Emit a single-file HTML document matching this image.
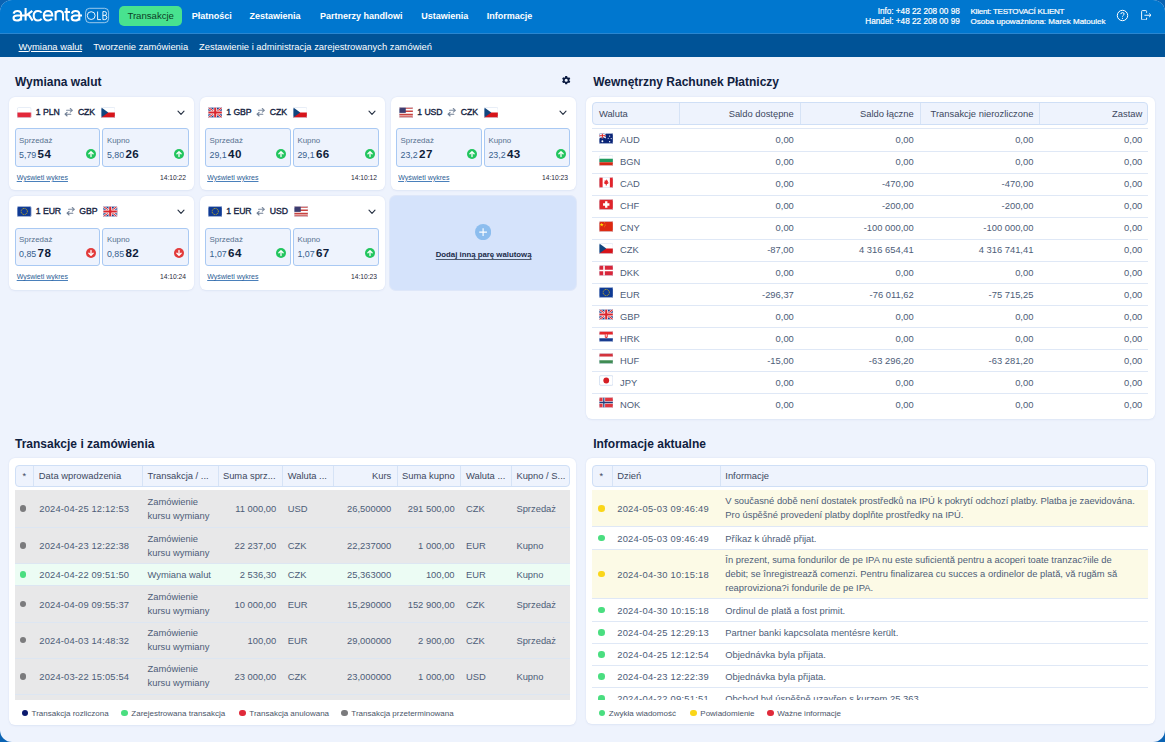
<!DOCTYPE html><html><head><meta charset="utf-8"><style>
*{box-sizing:border-box;margin:0;padding:0}
html,body{width:1165px;height:742px;overflow:hidden;background:#0a63b3;font-family:"Liberation Sans",sans-serif}
.win{position:absolute;left:0;top:0;width:1165px;height:742px;border-radius:12px;overflow:hidden;background:#eef3fd}
.abs{position:absolute}
.t{position:absolute;white-space:nowrap}
.top{position:absolute;left:0;top:0;width:1165px;height:34px;background:#0077cf;border-bottom:1px solid #2a86d0}
.sub{position:absolute;left:0;top:34px;width:1165px;height:23px;background:#005397}
.card{position:absolute;background:#fff;border-radius:6px;box-shadow:0 0 0 0.5px rgba(215,226,244,.3),0 0.5px 2px rgba(60,90,150,.08)}
.ib{position:absolute;background:#eef3fd;border:1px solid #a9c9f3;border-radius:3px}
.thd{position:absolute;background:#eef3fd;border:1px solid #cfdff6;border-radius:4px}
.vsep{position:absolute;top:0;bottom:0;width:1px;background:#d6e3f6}
.hline{position:absolute;height:1px;background:#dfe8f6}
.row{position:absolute;border-bottom:1px solid #dfe8f6}
.dot{position:absolute;border-radius:50%}
</style></head><body>
<svg width="0" height="0" style="position:absolute"><defs><clipPath id="cpl"><rect width="15" height="11" rx="1.6"/></clipPath><symbol id="fpl" viewBox="0 0 15 11"><g clip-path="url(#cpl)"><rect width="15" height="5.5" fill="#fff"/><rect y="5.5" width="15" height="5.5" fill="#e3283a"/></g><rect x=".35" y=".35" width="14.3" height="10.3" rx="1.5" fill="none" stroke="#d3deef" stroke-opacity=".8" stroke-width=".7"/></symbol><clipPath id="ccz"><rect width="15" height="11" rx="1.6"/></clipPath><symbol id="fcz" viewBox="0 0 15 11"><g clip-path="url(#ccz)"><rect width="15" height="5.5" fill="#fff"/><rect y="5.5" width="15" height="5.5" fill="#d7141a"/><path d="M0 0L7.5 5.5L0 11Z" fill="#11457e"/></g><rect x=".35" y=".35" width="14.3" height="10.3" rx="1.5" fill="none" stroke="#d3deef" stroke-opacity=".8" stroke-width=".7"/></symbol><clipPath id="cgb"><rect width="15" height="11" rx="1.6"/></clipPath><symbol id="fgb" viewBox="0 0 15 11"><g clip-path="url(#cgb)"><rect width="15" height="11" fill="#1f3f8a"/><path d="M0 0L15 11M15 0L0 11" stroke="#fff" stroke-width="2.2"/><path d="M0 0L15 11M15 0L0 11" stroke="#d9262e" stroke-width="1.1"/><path d="M7.5 0V11M0 5.5H15" stroke="#fff" stroke-width="3.6"/><path d="M7.5 0V11M0 5.5H15" stroke="#d9262e" stroke-width="2.2"/></g><rect x=".35" y=".35" width="14.3" height="10.3" rx="1.5" fill="none" stroke="#d3deef" stroke-opacity=".8" stroke-width=".7"/></symbol><clipPath id="cus"><rect width="15" height="11" rx="1.6"/></clipPath><symbol id="fus" viewBox="0 0 15 11"><g clip-path="url(#cus)"><rect width="15" height="11" fill="#fff"/><path d="M0 0.85H15M0 4.25H15M0 7.65H15M0 10.2H15" stroke="#c8423f" stroke-width="1.7"/><path d="M0 2.55H15M0 5.95H15" stroke="#fff" stroke-width="0"/><rect width="7" height="5.9" fill="#3c3b6e"/></g><rect x=".35" y=".35" width="14.3" height="10.3" rx="1.5" fill="none" stroke="#d3deef" stroke-opacity=".8" stroke-width=".7"/></symbol><clipPath id="ceu"><rect width="15" height="11" rx="1.6"/></clipPath><symbol id="feu" viewBox="0 0 15 11"><g clip-path="url(#ceu)"><rect width="15" height="11" fill="#0f3a94"/><circle cx="7.5" cy="5.5" r="3.2" fill="none" stroke="#f5cc00" stroke-width="0.9" stroke-dasharray="0.9 0.78"/></g><rect x=".35" y=".35" width="14.3" height="10.3" rx="1.5" fill="none" stroke="#d3deef" stroke-opacity=".8" stroke-width=".7"/></symbol><clipPath id="cau"><rect width="15" height="11" rx="1.6"/></clipPath><symbol id="fau" viewBox="0 0 15 11"><g clip-path="url(#cau)"><rect width="15" height="11" fill="#0b2577"/><path d="M0 0L7 5M7 0L0 5" stroke="#fff" stroke-width="1.2"/><path d="M3.5 0V5.2M0 2.6H7" stroke="#fff" stroke-width="1.8"/><path d="M3.5 0V5.2M0 2.6H7" stroke="#d22" stroke-width="1"/><circle cx="3.5" cy="8.3" r="1" fill="#fff"/><circle cx="11" cy="3" r=".7" fill="#fff"/><circle cx="12.6" cy="5.6" r=".6" fill="#fff"/><circle cx="11" cy="8.8" r=".7" fill="#fff"/><circle cx="9.5" cy="5.2" r=".6" fill="#fff"/></g><rect x=".35" y=".35" width="14.3" height="10.3" rx="1.5" fill="none" stroke="#d3deef" stroke-opacity=".8" stroke-width=".7"/></symbol><clipPath id="cbg"><rect width="15" height="11" rx="1.6"/></clipPath><symbol id="fbg" viewBox="0 0 15 11"><g clip-path="url(#cbg)"><rect width="15" height="3.67" fill="#fff"/><rect y="3.67" width="15" height="3.67" fill="#1f9a5e"/><rect y="7.33" width="15" height="3.67" fill="#d62612"/></g><rect x=".35" y=".35" width="14.3" height="10.3" rx="1.5" fill="none" stroke="#d3deef" stroke-opacity=".8" stroke-width=".7"/></symbol><clipPath id="cca"><rect width="15" height="11" rx="1.6"/></clipPath><symbol id="fca" viewBox="0 0 15 11"><g clip-path="url(#cca)"><rect width="15" height="11" fill="#fff"/><rect width="3.75" height="11" fill="#e3242b"/><rect x="11.25" width="3.75" height="11" fill="#e3242b"/><path d="M7.5 2.2L8.3 3.8L9.4 3.4L9 5.6L10 5.2L9.6 6.6L8 7.4V8.6H7V7.4L5.4 6.6L5 5.2L6 5.6L5.6 3.4L6.7 3.8Z" fill="#e3242b"/></g><rect x=".35" y=".35" width="14.3" height="10.3" rx="1.5" fill="none" stroke="#d3deef" stroke-opacity=".8" stroke-width=".7"/></symbol><clipPath id="cch"><rect width="15" height="11" rx="1.6"/></clipPath><symbol id="fch" viewBox="0 0 15 11"><g clip-path="url(#cch)"><rect width="15" height="11" fill="#e0242b"/><path d="M6.3 2.2H8.7V4.3H10.8V6.7H8.7V8.8H6.3V6.7H4.2V4.3H6.3Z" fill="#fff"/></g><rect x=".35" y=".35" width="14.3" height="10.3" rx="1.5" fill="none" stroke="#d3deef" stroke-opacity=".8" stroke-width=".7"/></symbol><clipPath id="ccn"><rect width="15" height="11" rx="1.6"/></clipPath><symbol id="fcn" viewBox="0 0 15 11"><g clip-path="url(#ccn)"><rect width="15" height="11" fill="#de2910"/><path d="M2.8 1.5L3.3 3L4.9 3L3.6 3.9L4.1 5.4L2.8 4.5L1.5 5.4L2 3.9L0.7 3L2.3 3Z" fill="#ffde00"/><circle cx="5.5" cy="1.6" r=".4" fill="#ffde00"/><circle cx="6.3" cy="3" r=".4" fill="#ffde00"/><circle cx="6.3" cy="4.6" r=".4" fill="#ffde00"/><circle cx="5.5" cy="5.8" r=".4" fill="#ffde00"/></g><rect x=".35" y=".35" width="14.3" height="10.3" rx="1.5" fill="none" stroke="#d3deef" stroke-opacity=".8" stroke-width=".7"/></symbol><clipPath id="cdk"><rect width="15" height="11" rx="1.6"/></clipPath><symbol id="fdk" viewBox="0 0 15 11"><g clip-path="url(#cdk)"><rect width="15" height="11" fill="#d8263a"/><path d="M5.2 0V11M0 5.5H15" stroke="#fff" stroke-width="1.6"/></g><rect x=".35" y=".35" width="14.3" height="10.3" rx="1.5" fill="none" stroke="#d3deef" stroke-opacity=".8" stroke-width=".7"/></symbol><clipPath id="chr"><rect width="15" height="11" rx="1.6"/></clipPath><symbol id="fhr" viewBox="0 0 15 11"><g clip-path="url(#chr)"><rect width="15" height="3.67" fill="#e5262b"/><rect y="3.67" width="15" height="3.67" fill="#fff"/><rect y="7.33" width="15" height="3.67" fill="#173a8f"/><path d="M6 2.6H9V6.4Q7.5 8 6 6.4Z" fill="#e5262b"/><path d="M6.7 3.2H8.3V5.8H6.7Z" fill="#fff" opacity=".7"/></g><rect x=".35" y=".35" width="14.3" height="10.3" rx="1.5" fill="none" stroke="#d3deef" stroke-opacity=".8" stroke-width=".7"/></symbol><clipPath id="chu"><rect width="15" height="11" rx="1.6"/></clipPath><symbol id="fhu" viewBox="0 0 15 11"><g clip-path="url(#chu)"><rect width="15" height="3.67" fill="#d3333d"/><rect y="3.67" width="15" height="3.67" fill="#fff"/><rect y="7.33" width="15" height="3.67" fill="#3f8c52"/></g><rect x=".35" y=".35" width="14.3" height="10.3" rx="1.5" fill="none" stroke="#d3deef" stroke-opacity=".8" stroke-width=".7"/></symbol><clipPath id="cjp"><rect width="15" height="11" rx="1.6"/></clipPath><symbol id="fjp" viewBox="0 0 15 11"><g clip-path="url(#cjp)"><rect x=".5" y=".5" width="14" height="10" rx="1.5" fill="#fff" stroke="#dbe6f6"/><circle cx="7.5" cy="5.5" r="3" fill="#d51d24"/></g><rect x=".35" y=".35" width="14.3" height="10.3" rx="1.5" fill="none" stroke="#d3deef" stroke-opacity=".8" stroke-width=".7"/></symbol><clipPath id="cno"><rect width="15" height="11" rx="1.6"/></clipPath><symbol id="fno" viewBox="0 0 15 11"><g clip-path="url(#cno)"><rect width="15" height="11" fill="#e0373f"/><path d="M5 0V11M0 5.5H15" stroke="#fff" stroke-width="2.6"/><path d="M5 0V11M0 5.5H15" stroke="#203d7a" stroke-width="1.3"/></g><rect x=".35" y=".35" width="14.3" height="10.3" rx="1.5" fill="none" stroke="#d3deef" stroke-opacity=".8" stroke-width=".7"/></symbol></defs></svg>
<div class="win">
<div class="top"></div><div class="sub"></div>
<svg class="abs" style="left:0;top:0" width="90" height="26" viewBox="0 0 90 26"><g fill="none" stroke="#fff" stroke-width="2.05"><path d="M13.5 13.6Q14.3 10.9 17.3 10.9Q21.1 10.9 21.1 14.3V20.6"/><path d="M25.6 15.4H17.1Q13.5 15.4 13.5 18Q13.5 20.5 16.9 20.5Q20 20.5 21.1 18.2"/><path d="M25.6 8.1V20.6M32.3 10.9L25.8 15.9M28.3 14.1L32.6 20.6"/><path d="M41.6 12.7Q40.4 10.9 38 10.9Q33.7 10.9 33.7 15.7Q33.7 20.5 38 20.5Q40.4 20.5 41.6 18.7"/><path d="M43.8 15.5H52.3Q52.3 10.9 48.1 10.9Q43.8 10.9 43.8 15.7Q43.8 20.5 48.2 20.5Q50.8 20.5 51.9 18.6"/><path d="M55.6 10.9V20.6M55.6 14.6Q55.6 10.9 59.3 10.9Q63 10.9 63 14.6V20.6"/><path d="M66.6 8V18.3Q66.6 20.5 69.2 20.5M64.5 11.9H70"/><path d="M71.7 13.6Q72.5 10.9 75.5 10.9Q79.3 10.9 79.3 14.3V20.6"/><path d="M82 15.4H75.3Q71.7 15.4 71.7 18Q71.7 20.5 75.1 20.5Q78.2 20.5 79.3 18.2"/></g></svg>
<svg class="abs" style="left:80px;top:4px" width="32" height="22" viewBox="80 4 32 22"><rect x="85.6" y="8.3" width="23" height="14.4" rx="4" fill="none" stroke="#fff" stroke-opacity=".6" stroke-width="1"/><g fill="none" stroke="#fff" stroke-opacity=".92" stroke-width="1"><circle cx="91.2" cy="15.6" r="3.9"/><path d="M97.6 11.5V19.6H100.9"/><path d="M102.9 19.6V11.6H104.7Q106.5 11.6 106.5 13.5Q106.5 15.4 104.7 15.4H102.9M104.7 15.4Q106.9 15.4 106.9 17.5Q106.9 19.6 104.7 19.6H102.9"/></g></svg>
<div class="abs" style="left:119px;top:6px;width:63px;height:20px;border-radius:5px;background:#48e28f"></div>
<div class="t " style="top:11.17px;font-size:9.6px;line-height:9.6px;left:127.4px;color:#0d3f25;">Transakcje</div>
<div class="t " style="top:12.38px;font-size:9px;line-height:9px;left:191.7px;font-weight:bold;color:#fff;">Płatności</div>
<div class="t " style="top:12.38px;font-size:9px;line-height:9px;left:249.5px;font-weight:bold;color:#fff;">Zestawienia</div>
<div class="t " style="top:12.38px;font-size:9px;line-height:9px;left:320px;font-weight:bold;color:#fff;">Partnerzy handlowi</div>
<div class="t " style="top:12.38px;font-size:9px;line-height:9px;left:421.2px;font-weight:bold;color:#fff;">Ustawienia</div>
<div class="t " style="top:12.38px;font-size:9px;line-height:9px;left:486.8px;font-weight:bold;color:#fff;">Informacje</div>
<div class="t " style="top:41.64px;font-size:9.4px;line-height:9.4px;left:18.6px;color:#fff;text-decoration:underline">Wymiana walut</div>
<div class="t " style="top:41.64px;font-size:9.4px;line-height:9.4px;left:93.3px;color:#fff;">Tworzenie zamówienia</div>
<div class="t " style="top:41.64px;font-size:9.4px;line-height:9.4px;left:199px;color:#fff;">Zestawienie i administracja zarejestrowanych zamówień</div>
<div class="t " style="top:7.96px;font-size:8.2px;line-height:8.2px;right:205.20px;text-align:right;color:#fff;-webkit-text-stroke:0.2px #fff">Info: +48 22 208 00 98</div>
<div class="t " style="top:17.56px;font-size:8.2px;line-height:8.2px;right:205.20px;text-align:right;color:#fff;-webkit-text-stroke:0.2px #fff">Handel: +48 22 208 00 99</div>
<div class="t " style="top:8.09px;font-size:8.05px;line-height:8.05px;left:970.5px;color:#fff;-webkit-text-stroke:0.2px #fff;letter-spacing:-0.25px">Klient: TESTOVACÍ KLIENT</div>
<div class="t " style="top:17.69px;font-size:8.05px;line-height:8.05px;left:970.5px;color:#fff;-webkit-text-stroke:0.2px #fff">Osoba upoważniona: Marek Matoulek</div>
<svg class="abs" style="left:1116px;top:8.5px" width="13" height="13" viewBox="0 0 13 13"><circle cx="6.5" cy="6.5" r="5.2" fill="none" stroke="#fff" stroke-width="1"/><path d="M4.9 5.1Q4.9 3.6 6.5 3.6Q8.1 3.6 8.1 5Q8.1 5.9 7.2 6.4Q6.5 6.8 6.5 7.6" fill="none" stroke="#fff" stroke-width="1"/><circle cx="6.5" cy="9.3" r=".6" fill="#fff"/></svg>
<svg class="abs" style="left:1140.5px;top:9.5px" width="11" height="10.5" viewBox="0 0 11 10.5"><path d="M5.6 2.8V1.5Q5.6 0.6 4.8 0.6H1.4Q0.6 0.6 0.6 1.5V9Q0.6 9.9 1.4 9.9H4.8Q5.6 9.9 5.6 9V7.7" fill="none" stroke="#fff" stroke-width="0.95"/><path d="M3.4 5.25H10M8.1 3.4L10 5.25L8.1 7.1" fill="none" stroke="#fff" stroke-width="0.95" stroke-linejoin="round"/></svg>
<div class="t " style="top:76.04px;font-size:12px;line-height:12px;left:15px;font-weight:bold;color:#10213f;">Wymiana walut</div>
<div class="t " style="top:75.64px;font-size:12px;line-height:12px;left:593.2px;font-weight:bold;color:#10213f;">Wewnętrzny Rachunek Płatniczy</div>
<div class="t " style="top:438.04px;font-size:12px;line-height:12px;left:15px;font-weight:bold;color:#10213f;">Transakcje i zamówienia</div>
<div class="t " style="top:438.04px;font-size:12px;line-height:12px;left:593.2px;font-weight:bold;color:#10213f;">Informacje aktualne</div>
<svg class="abs" style="left:561px;top:75px" width="10.4" height="10.4" viewBox="0 0 24 24"><path fill="#0a1a40" d="M19.14 12.94c.04-.3.06-.61.06-.94 0-.32-.02-.64-.07-.94l2.03-1.58a.49.49 0 0 0 .12-.61l-1.92-3.32a.49.49 0 0 0-.59-.22l-2.39.96c-.5-.38-1.03-.7-1.62-.94l-.36-2.54a.48.48 0 0 0-.48-.41h-3.84c-.24 0-.43.17-.47.41l-.36 2.54c-.59.24-1.13.57-1.62.94l-2.39-.96a.48.48 0 0 0-.59.22L2.74 8.87c-.12.21-.08.47.12.61l2.03 1.58c-.05.3-.09.63-.09.94s.02.64.07.94l-2.03 1.58a.49.49 0 0 0-.12.61l1.92 3.32c.12.22.37.29.59.22l2.39-.96c.5.38 1.03.7 1.62.94l.36 2.54c.05.24.24.41.48.41h3.84c.24 0 .44-.17.47-.41l.36-2.54c.59-.24 1.13-.56 1.62-.94l2.39.96c.22.08.47 0 .59-.22l1.92-3.32c.12-.22.07-.47-.12-.61l-2.01-1.58zM12 15.6A3.6 3.6 0 1 1 12 8.4a3.6 3.6 0 0 1 0 7.2z"/></svg>
<div class="card" style="left:9px;top:97px;width:185px;height:93px"></div>
<div class="t" style="left:17px;top:106.7px;height:11px;display:flex;align-items:center;font-size:8.7px;line-height:8.7px;letter-spacing:-0.08px;color:#15233f;-webkit-text-stroke:0.35px #15233f"><svg width="14.5" height="11" style="margin-right:4.35px;flex:none"><use href="#fpl"/></svg><span>1 PLN</span><svg style="margin:0 4.3px 0 4.6px;flex:none;position:relative;top:0.3px" width="9.4" height="9" viewBox="0 0 9.4 9"><path d="M2.6 2.3H8.2M6.3 0.5L8.4 2.3L6.3 4.1" fill="none" stroke="#7e8ca0" stroke-width="1.1" stroke-linecap="round" stroke-linejoin="round"/><path d="M6.8 6.2H1.2M3.1 4.4L1 6.2L3.1 8" fill="none" stroke="#6f7e94" stroke-width="1.1" stroke-linecap="round" stroke-linejoin="round"/></svg><span>CZK</span><svg width="14.5" height="11" style="margin-left:5.6px;flex:none"><use href="#fcz"/></svg></div>
<svg class="abs" style="left:176.5px;top:110px" width="8" height="6" viewBox="0 0 8 6"><path d="M1 1.2L4 4.3L7 1.2" fill="none" stroke="#273244" stroke-width="1.15" stroke-linecap="round" stroke-linejoin="round"/></svg>
<div class="ib" style="left:14.50px;top:128.3px;width:85.60px;height:38.5px"></div>
<div class="t " style="top:136.71px;font-size:7.9px;line-height:7.9px;left:19.0px;color:#56718f;">Sprzedaż</div>
<div class="t" style="left:19.00px;top:147.54px;font-size:12px;line-height:12px;color:#0f1d3a"><span style="font-size:8.9px;color:#385f8e">5,79</span><b style="font-size:11.6px;margin-left:1.3px;letter-spacing:0.4px">54</b></div>
<svg class="abs" style="left:85.8px;top:148.5px" width="10" height="10" viewBox="0 0 10 10"><circle cx="5" cy="5" r="5" fill="#22c55e"/><path d="M5 7.6V2.6M2.9 4.7L5 2.6L7.1 4.7" fill="none" stroke="#fff" stroke-width="1.3" stroke-linecap="round" stroke-linejoin="round"/></svg>
<div class="ib" style="left:102.40px;top:128.3px;width:86.20px;height:38.5px"></div>
<div class="t " style="top:136.71px;font-size:7.9px;line-height:7.9px;left:106.9px;color:#56718f;">Kupno</div>
<div class="t" style="left:106.90px;top:147.54px;font-size:12px;line-height:12px;color:#0f1d3a"><span style="font-size:8.9px;color:#385f8e">5,80</span><b style="font-size:11.6px;margin-left:1.3px;letter-spacing:0.4px">26</b></div>
<svg class="abs" style="left:174.3px;top:148.5px" width="10" height="10" viewBox="0 0 10 10"><circle cx="5" cy="5" r="5" fill="#22c55e"/><path d="M5 7.6V2.6M2.9 4.7L5 2.6L7.1 4.7" fill="none" stroke="#fff" stroke-width="1.3" stroke-linecap="round" stroke-linejoin="round"/></svg>
<div class="t " style="top:173.87px;font-size:7px;line-height:7px;left:16.7px;color:#2c5e96;text-decoration:underline;text-decoration-color:#4a80bb">Wyświetl wykres</div>
<div class="t " style="top:174.73px;font-size:6.7px;line-height:6.7px;right:979.00px;text-align:right;color:#1f2838;">14:10:22</div>
<div class="card" style="left:199.5px;top:97px;width:185.5px;height:93px"></div>
<div class="t" style="left:207.5px;top:106.7px;height:11px;display:flex;align-items:center;font-size:8.7px;line-height:8.7px;letter-spacing:-0.08px;color:#15233f;-webkit-text-stroke:0.35px #15233f"><svg width="14.5" height="11" style="margin-right:4.35px;flex:none"><use href="#fgb"/></svg><span>1 GBP</span><svg style="margin:0 4.3px 0 4.6px;flex:none;position:relative;top:0.3px" width="9.4" height="9" viewBox="0 0 9.4 9"><path d="M2.6 2.3H8.2M6.3 0.5L8.4 2.3L6.3 4.1" fill="none" stroke="#7e8ca0" stroke-width="1.1" stroke-linecap="round" stroke-linejoin="round"/><path d="M6.8 6.2H1.2M3.1 4.4L1 6.2L3.1 8" fill="none" stroke="#6f7e94" stroke-width="1.1" stroke-linecap="round" stroke-linejoin="round"/></svg><span>CZK</span><svg width="14.5" height="11" style="margin-left:5.6px;flex:none"><use href="#fcz"/></svg></div>
<svg class="abs" style="left:367.5px;top:110px" width="8" height="6" viewBox="0 0 8 6"><path d="M1 1.2L4 4.3L7 1.2" fill="none" stroke="#273244" stroke-width="1.15" stroke-linecap="round" stroke-linejoin="round"/></svg>
<div class="ib" style="left:205.00px;top:128.3px;width:85.60px;height:38.5px"></div>
<div class="t " style="top:136.71px;font-size:7.9px;line-height:7.9px;left:209.5px;color:#56718f;">Sprzedaż</div>
<div class="t" style="left:209.50px;top:147.54px;font-size:12px;line-height:12px;color:#0f1d3a"><span style="font-size:8.9px;color:#385f8e">29,1</span><b style="font-size:11.6px;margin-left:1.3px;letter-spacing:0.4px">40</b></div>
<svg class="abs" style="left:276.3px;top:148.5px" width="10" height="10" viewBox="0 0 10 10"><circle cx="5" cy="5" r="5" fill="#22c55e"/><path d="M5 7.6V2.6M2.9 4.7L5 2.6L7.1 4.7" fill="none" stroke="#fff" stroke-width="1.3" stroke-linecap="round" stroke-linejoin="round"/></svg>
<div class="ib" style="left:292.90px;top:128.3px;width:86.20px;height:38.5px"></div>
<div class="t " style="top:136.71px;font-size:7.9px;line-height:7.9px;left:297.4px;color:#56718f;">Kupno</div>
<div class="t" style="left:297.40px;top:147.54px;font-size:12px;line-height:12px;color:#0f1d3a"><span style="font-size:8.9px;color:#385f8e">29,1</span><b style="font-size:11.6px;margin-left:1.3px;letter-spacing:0.4px">66</b></div>
<svg class="abs" style="left:364.8px;top:148.5px" width="10" height="10" viewBox="0 0 10 10"><circle cx="5" cy="5" r="5" fill="#22c55e"/><path d="M5 7.6V2.6M2.9 4.7L5 2.6L7.1 4.7" fill="none" stroke="#fff" stroke-width="1.3" stroke-linecap="round" stroke-linejoin="round"/></svg>
<div class="t " style="top:173.87px;font-size:7px;line-height:7px;left:207.2px;color:#2c5e96;text-decoration:underline;text-decoration-color:#4a80bb">Wyświetl wykres</div>
<div class="t " style="top:174.73px;font-size:6.7px;line-height:6.7px;right:788.00px;text-align:right;color:#1f2838;">14:10:12</div>
<div class="card" style="left:390.5px;top:97px;width:185.5px;height:93px"></div>
<div class="t" style="left:398.5px;top:106.7px;height:11px;display:flex;align-items:center;font-size:8.7px;line-height:8.7px;letter-spacing:-0.08px;color:#15233f;-webkit-text-stroke:0.35px #15233f"><svg width="14.5" height="11" style="margin-right:4.35px;flex:none"><use href="#fus"/></svg><span>1 USD</span><svg style="margin:0 4.3px 0 4.6px;flex:none;position:relative;top:0.3px" width="9.4" height="9" viewBox="0 0 9.4 9"><path d="M2.6 2.3H8.2M6.3 0.5L8.4 2.3L6.3 4.1" fill="none" stroke="#7e8ca0" stroke-width="1.1" stroke-linecap="round" stroke-linejoin="round"/><path d="M6.8 6.2H1.2M3.1 4.4L1 6.2L3.1 8" fill="none" stroke="#6f7e94" stroke-width="1.1" stroke-linecap="round" stroke-linejoin="round"/></svg><span>CZK</span><svg width="14.5" height="11" style="margin-left:5.6px;flex:none"><use href="#fcz"/></svg></div>
<svg class="abs" style="left:558.5px;top:110px" width="8" height="6" viewBox="0 0 8 6"><path d="M1 1.2L4 4.3L7 1.2" fill="none" stroke="#273244" stroke-width="1.15" stroke-linecap="round" stroke-linejoin="round"/></svg>
<div class="ib" style="left:396.00px;top:128.3px;width:85.60px;height:38.5px"></div>
<div class="t " style="top:136.71px;font-size:7.9px;line-height:7.9px;left:400.5px;color:#56718f;">Sprzedaż</div>
<div class="t" style="left:400.50px;top:147.54px;font-size:12px;line-height:12px;color:#0f1d3a"><span style="font-size:8.9px;color:#385f8e">23,2</span><b style="font-size:11.6px;margin-left:1.3px;letter-spacing:0.4px">27</b></div>
<svg class="abs" style="left:467.3px;top:148.5px" width="10" height="10" viewBox="0 0 10 10"><circle cx="5" cy="5" r="5" fill="#22c55e"/><path d="M5 7.6V2.6M2.9 4.7L5 2.6L7.1 4.7" fill="none" stroke="#fff" stroke-width="1.3" stroke-linecap="round" stroke-linejoin="round"/></svg>
<div class="ib" style="left:483.90px;top:128.3px;width:86.20px;height:38.5px"></div>
<div class="t " style="top:136.71px;font-size:7.9px;line-height:7.9px;left:488.4px;color:#56718f;">Kupno</div>
<div class="t" style="left:488.40px;top:147.54px;font-size:12px;line-height:12px;color:#0f1d3a"><span style="font-size:8.9px;color:#385f8e">23,2</span><b style="font-size:11.6px;margin-left:1.3px;letter-spacing:0.4px">43</b></div>
<svg class="abs" style="left:555.8px;top:148.5px" width="10" height="10" viewBox="0 0 10 10"><circle cx="5" cy="5" r="5" fill="#22c55e"/><path d="M5 7.6V2.6M2.9 4.7L5 2.6L7.1 4.7" fill="none" stroke="#fff" stroke-width="1.3" stroke-linecap="round" stroke-linejoin="round"/></svg>
<div class="t " style="top:173.87px;font-size:7px;line-height:7px;left:398.2px;color:#2c5e96;text-decoration:underline;text-decoration-color:#4a80bb">Wyświetl wykres</div>
<div class="t " style="top:174.73px;font-size:6.7px;line-height:6.7px;right:597.00px;text-align:right;color:#1f2838;">14:10:23</div>
<div class="card" style="left:9px;top:196.3px;width:185px;height:93.5px"></div>
<div class="t" style="left:17px;top:206.0px;height:11px;display:flex;align-items:center;font-size:8.7px;line-height:8.7px;letter-spacing:-0.08px;color:#15233f;-webkit-text-stroke:0.35px #15233f"><svg width="14.5" height="11" style="margin-right:4.35px;flex:none"><use href="#feu"/></svg><span>1 EUR</span><svg style="margin:0 4.3px 0 4.6px;flex:none;position:relative;top:0.3px" width="9.4" height="9" viewBox="0 0 9.4 9"><path d="M2.6 2.3H8.2M6.3 0.5L8.4 2.3L6.3 4.1" fill="none" stroke="#7e8ca0" stroke-width="1.1" stroke-linecap="round" stroke-linejoin="round"/><path d="M6.8 6.2H1.2M3.1 4.4L1 6.2L3.1 8" fill="none" stroke="#6f7e94" stroke-width="1.1" stroke-linecap="round" stroke-linejoin="round"/></svg><span>GBP</span><svg width="14.5" height="11" style="margin-left:5.6px;flex:none"><use href="#fgb"/></svg></div>
<svg class="abs" style="left:176.5px;top:209.3px" width="8" height="6" viewBox="0 0 8 6"><path d="M1 1.2L4 4.3L7 1.2" fill="none" stroke="#273244" stroke-width="1.15" stroke-linecap="round" stroke-linejoin="round"/></svg>
<div class="ib" style="left:14.50px;top:227.60000000000002px;width:85.60px;height:38.5px"></div>
<div class="t " style="top:236.01px;font-size:7.9px;line-height:7.9px;left:19.0px;color:#56718f;">Sprzedaż</div>
<div class="t" style="left:19.00px;top:246.84px;font-size:12px;line-height:12px;color:#0f1d3a"><span style="font-size:8.9px;color:#385f8e">0,85</span><b style="font-size:11.6px;margin-left:1.3px;letter-spacing:0.4px">78</b></div>
<svg class="abs" style="left:85.8px;top:247.8px" width="10" height="10" viewBox="0 0 10 10"><circle cx="5" cy="5" r="5" fill="#e23b3b"/><path d="M5 2.4V7.4M2.9 5.3L5 7.4L7.1 5.3" fill="none" stroke="#fff" stroke-width="1.3" stroke-linecap="round" stroke-linejoin="round"/></svg>
<div class="ib" style="left:102.40px;top:227.60000000000002px;width:86.20px;height:38.5px"></div>
<div class="t " style="top:236.01px;font-size:7.9px;line-height:7.9px;left:106.9px;color:#56718f;">Kupno</div>
<div class="t" style="left:106.90px;top:246.84px;font-size:12px;line-height:12px;color:#0f1d3a"><span style="font-size:8.9px;color:#385f8e">0,85</span><b style="font-size:11.6px;margin-left:1.3px;letter-spacing:0.4px">82</b></div>
<svg class="abs" style="left:174.3px;top:247.8px" width="10" height="10" viewBox="0 0 10 10"><circle cx="5" cy="5" r="5" fill="#e23b3b"/><path d="M5 2.4V7.4M2.9 5.3L5 7.4L7.1 5.3" fill="none" stroke="#fff" stroke-width="1.3" stroke-linecap="round" stroke-linejoin="round"/></svg>
<div class="t " style="top:273.17px;font-size:7px;line-height:7px;left:16.7px;color:#2c5e96;text-decoration:underline;text-decoration-color:#4a80bb">Wyświetl wykres</div>
<div class="t " style="top:274.03px;font-size:6.7px;line-height:6.7px;right:979.00px;text-align:right;color:#1f2838;">14:10:24</div>
<div class="card" style="left:199.5px;top:196.3px;width:185.5px;height:93.5px"></div>
<div class="t" style="left:207.5px;top:206.0px;height:11px;display:flex;align-items:center;font-size:8.7px;line-height:8.7px;letter-spacing:-0.08px;color:#15233f;-webkit-text-stroke:0.35px #15233f"><svg width="14.5" height="11" style="margin-right:4.35px;flex:none"><use href="#feu"/></svg><span>1 EUR</span><svg style="margin:0 4.3px 0 4.6px;flex:none;position:relative;top:0.3px" width="9.4" height="9" viewBox="0 0 9.4 9"><path d="M2.6 2.3H8.2M6.3 0.5L8.4 2.3L6.3 4.1" fill="none" stroke="#7e8ca0" stroke-width="1.1" stroke-linecap="round" stroke-linejoin="round"/><path d="M6.8 6.2H1.2M3.1 4.4L1 6.2L3.1 8" fill="none" stroke="#6f7e94" stroke-width="1.1" stroke-linecap="round" stroke-linejoin="round"/></svg><span>USD</span><svg width="14.5" height="11" style="margin-left:5.6px;flex:none"><use href="#fus"/></svg></div>
<svg class="abs" style="left:367.5px;top:209.3px" width="8" height="6" viewBox="0 0 8 6"><path d="M1 1.2L4 4.3L7 1.2" fill="none" stroke="#273244" stroke-width="1.15" stroke-linecap="round" stroke-linejoin="round"/></svg>
<div class="ib" style="left:205.00px;top:227.60000000000002px;width:85.60px;height:38.5px"></div>
<div class="t " style="top:236.01px;font-size:7.9px;line-height:7.9px;left:209.5px;color:#56718f;">Sprzedaż</div>
<div class="t" style="left:209.50px;top:246.84px;font-size:12px;line-height:12px;color:#0f1d3a"><span style="font-size:8.9px;color:#385f8e">1,07</span><b style="font-size:11.6px;margin-left:1.3px;letter-spacing:0.4px">64</b></div>
<svg class="abs" style="left:276.3px;top:247.8px" width="10" height="10" viewBox="0 0 10 10"><circle cx="5" cy="5" r="5" fill="#22c55e"/><path d="M5 7.6V2.6M2.9 4.7L5 2.6L7.1 4.7" fill="none" stroke="#fff" stroke-width="1.3" stroke-linecap="round" stroke-linejoin="round"/></svg>
<div class="ib" style="left:292.90px;top:227.60000000000002px;width:86.20px;height:38.5px"></div>
<div class="t " style="top:236.01px;font-size:7.9px;line-height:7.9px;left:297.4px;color:#56718f;">Kupno</div>
<div class="t" style="left:297.40px;top:246.84px;font-size:12px;line-height:12px;color:#0f1d3a"><span style="font-size:8.9px;color:#385f8e">1,07</span><b style="font-size:11.6px;margin-left:1.3px;letter-spacing:0.4px">67</b></div>
<svg class="abs" style="left:364.8px;top:247.8px" width="10" height="10" viewBox="0 0 10 10"><circle cx="5" cy="5" r="5" fill="#22c55e"/><path d="M5 7.6V2.6M2.9 4.7L5 2.6L7.1 4.7" fill="none" stroke="#fff" stroke-width="1.3" stroke-linecap="round" stroke-linejoin="round"/></svg>
<div class="t " style="top:273.17px;font-size:7px;line-height:7px;left:207.2px;color:#2c5e96;text-decoration:underline;text-decoration-color:#4a80bb">Wyświetl wykres</div>
<div class="t " style="top:274.03px;font-size:6.7px;line-height:6.7px;right:788.00px;text-align:right;color:#1f2838;">14:10:23</div>
<div class="card" style="left:390.4px;top:195.6px;width:185.6px;height:94.3px;background:#d5e3fb;box-shadow:0 0 0 1px rgba(205,220,245,.5)"></div>
<svg class="abs" style="left:475.2px;top:224.2px" width="16.2" height="16.2" viewBox="0 0 16 16"><circle cx="8" cy="8" r="8" fill="#8cbdee"/><path d="M8 4.2V11.8M4.2 8H11.8" stroke="#fff" stroke-width="1.1"/></svg>
<div class="t " style="top:250.80px;font-size:7.8px;line-height:7.8px;left:483.6px;font-weight:bold;color:#1a2b4a;transform:translateX(-50%);text-decoration:underline;text-underline-offset:2.4px;text-decoration-color:#4d5a6e">Dodaj inną parę walutową</div>
<div class="card" style="left:586px;top:97px;width:569px;height:321.5px"></div>
<div class="thd" style="left:592.4px;top:102.4px;width:555.6px;height:23.1px"><div class="vsep" style="left:86.0px"></div><div class="vsep" style="left:206.2px"></div><div class="vsep" style="left:326.3px"></div><div class="vsep" style="left:446.0px"></div></div>
<div class="hline" style="left:592.4px;top:128.4px;width:555.6px"></div>
<div class="t " style="top:109.24px;font-size:9.4px;line-height:9.4px;left:598.9px;color:#3d4860;">Waluta</div>
<div class="t " style="top:109.24px;font-size:9.4px;line-height:9.4px;right:371.20px;text-align:right;color:#3d4860;">Saldo dostępne</div>
<div class="t " style="top:109.24px;font-size:9.4px;line-height:9.4px;right:251.30px;text-align:right;color:#3d4860;">Saldo łączne</div>
<div class="t " style="top:109.24px;font-size:9.4px;line-height:9.4px;right:131.60px;text-align:right;color:#3d4860;">Transakcje nierozliczone</div>
<div class="t " style="top:109.24px;font-size:9.4px;line-height:9.4px;right:22.70px;text-align:right;color:#3d4860;">Zastaw</div>
<div class="hline" style="left:592.4px;top:150.55px;width:555.6px"></div>
<svg class="abs" style="left:598.8px;top:132.6px" width="14.5" height="11"><use href="#fau"/></svg>
<div class="t " style="top:135.24px;font-size:9.4px;line-height:9.4px;left:620px;color:#4d5d78;">AUD</div>
<div class="t " style="top:135.24px;font-size:9.4px;line-height:9.4px;right:371.20px;text-align:right;color:#4d5d78;">0,00</div>
<div class="t " style="top:135.24px;font-size:9.4px;line-height:9.4px;right:251.30px;text-align:right;color:#4d5d78;">0,00</div>
<div class="t " style="top:135.24px;font-size:9.4px;line-height:9.4px;right:131.60px;text-align:right;color:#4d5d78;">0,00</div>
<div class="t " style="top:135.24px;font-size:9.4px;line-height:9.4px;right:22.70px;text-align:right;color:#4d5d78;">0,00</div>
<div class="hline" style="left:592.4px;top:172.60px;width:555.6px"></div>
<svg class="abs" style="left:598.8px;top:154.65px" width="14.5" height="11"><use href="#fbg"/></svg>
<div class="t " style="top:157.29px;font-size:9.4px;line-height:9.4px;left:620px;color:#4d5d78;">BGN</div>
<div class="t " style="top:157.29px;font-size:9.4px;line-height:9.4px;right:371.20px;text-align:right;color:#4d5d78;">0,00</div>
<div class="t " style="top:157.29px;font-size:9.4px;line-height:9.4px;right:251.30px;text-align:right;color:#4d5d78;">0,00</div>
<div class="t " style="top:157.29px;font-size:9.4px;line-height:9.4px;right:131.60px;text-align:right;color:#4d5d78;">0,00</div>
<div class="t " style="top:157.29px;font-size:9.4px;line-height:9.4px;right:22.70px;text-align:right;color:#4d5d78;">0,00</div>
<div class="hline" style="left:592.4px;top:194.65px;width:555.6px"></div>
<svg class="abs" style="left:598.8px;top:176.7px" width="14.5" height="11"><use href="#fca"/></svg>
<div class="t " style="top:179.34px;font-size:9.4px;line-height:9.4px;left:620px;color:#4d5d78;">CAD</div>
<div class="t " style="top:179.34px;font-size:9.4px;line-height:9.4px;right:371.20px;text-align:right;color:#4d5d78;">0,00</div>
<div class="t " style="top:179.34px;font-size:9.4px;line-height:9.4px;right:251.30px;text-align:right;color:#4d5d78;">-470,00</div>
<div class="t " style="top:179.34px;font-size:9.4px;line-height:9.4px;right:131.60px;text-align:right;color:#4d5d78;">-470,00</div>
<div class="t " style="top:179.34px;font-size:9.4px;line-height:9.4px;right:22.70px;text-align:right;color:#4d5d78;">0,00</div>
<div class="hline" style="left:592.4px;top:216.70px;width:555.6px"></div>
<svg class="abs" style="left:598.8px;top:198.75px" width="14.5" height="11"><use href="#fch"/></svg>
<div class="t " style="top:201.39px;font-size:9.4px;line-height:9.4px;left:620px;color:#4d5d78;">CHF</div>
<div class="t " style="top:201.39px;font-size:9.4px;line-height:9.4px;right:371.20px;text-align:right;color:#4d5d78;">0,00</div>
<div class="t " style="top:201.39px;font-size:9.4px;line-height:9.4px;right:251.30px;text-align:right;color:#4d5d78;">-200,00</div>
<div class="t " style="top:201.39px;font-size:9.4px;line-height:9.4px;right:131.60px;text-align:right;color:#4d5d78;">-200,00</div>
<div class="t " style="top:201.39px;font-size:9.4px;line-height:9.4px;right:22.70px;text-align:right;color:#4d5d78;">0,00</div>
<div class="hline" style="left:592.4px;top:238.75px;width:555.6px"></div>
<svg class="abs" style="left:598.8px;top:220.8px" width="14.5" height="11"><use href="#fcn"/></svg>
<div class="t " style="top:223.44px;font-size:9.4px;line-height:9.4px;left:620px;color:#4d5d78;">CNY</div>
<div class="t " style="top:223.44px;font-size:9.4px;line-height:9.4px;right:371.20px;text-align:right;color:#4d5d78;">0,00</div>
<div class="t " style="top:223.44px;font-size:9.4px;line-height:9.4px;right:251.30px;text-align:right;color:#4d5d78;">-100 000,00</div>
<div class="t " style="top:223.44px;font-size:9.4px;line-height:9.4px;right:131.60px;text-align:right;color:#4d5d78;">-100 000,00</div>
<div class="t " style="top:223.44px;font-size:9.4px;line-height:9.4px;right:22.70px;text-align:right;color:#4d5d78;">0,00</div>
<div class="hline" style="left:592.4px;top:260.80px;width:555.6px"></div>
<svg class="abs" style="left:598.8px;top:242.85px" width="14.5" height="11"><use href="#fcz"/></svg>
<div class="t " style="top:245.49px;font-size:9.4px;line-height:9.4px;left:620px;color:#4d5d78;">CZK</div>
<div class="t " style="top:245.49px;font-size:9.4px;line-height:9.4px;right:371.20px;text-align:right;color:#4d5d78;">-87,00</div>
<div class="t " style="top:245.49px;font-size:9.4px;line-height:9.4px;right:251.30px;text-align:right;color:#4d5d78;">4 316 654,41</div>
<div class="t " style="top:245.49px;font-size:9.4px;line-height:9.4px;right:131.60px;text-align:right;color:#4d5d78;">4 316 741,41</div>
<div class="t " style="top:245.49px;font-size:9.4px;line-height:9.4px;right:22.70px;text-align:right;color:#4d5d78;">0,00</div>
<div class="hline" style="left:592.4px;top:282.85px;width:555.6px"></div>
<svg class="abs" style="left:598.8px;top:264.9px" width="14.5" height="11"><use href="#fdk"/></svg>
<div class="t " style="top:267.54px;font-size:9.4px;line-height:9.4px;left:620px;color:#4d5d78;">DKK</div>
<div class="t " style="top:267.54px;font-size:9.4px;line-height:9.4px;right:371.20px;text-align:right;color:#4d5d78;">0,00</div>
<div class="t " style="top:267.54px;font-size:9.4px;line-height:9.4px;right:251.30px;text-align:right;color:#4d5d78;">0,00</div>
<div class="t " style="top:267.54px;font-size:9.4px;line-height:9.4px;right:131.60px;text-align:right;color:#4d5d78;">0,00</div>
<div class="t " style="top:267.54px;font-size:9.4px;line-height:9.4px;right:22.70px;text-align:right;color:#4d5d78;">0,00</div>
<div class="hline" style="left:592.4px;top:304.90px;width:555.6px"></div>
<svg class="abs" style="left:598.8px;top:286.95px" width="14.5" height="11"><use href="#feu"/></svg>
<div class="t " style="top:289.59px;font-size:9.4px;line-height:9.4px;left:620px;color:#4d5d78;">EUR</div>
<div class="t " style="top:289.59px;font-size:9.4px;line-height:9.4px;right:371.20px;text-align:right;color:#4d5d78;">-296,37</div>
<div class="t " style="top:289.59px;font-size:9.4px;line-height:9.4px;right:251.30px;text-align:right;color:#4d5d78;">-76 011,62</div>
<div class="t " style="top:289.59px;font-size:9.4px;line-height:9.4px;right:131.60px;text-align:right;color:#4d5d78;">-75 715,25</div>
<div class="t " style="top:289.59px;font-size:9.4px;line-height:9.4px;right:22.70px;text-align:right;color:#4d5d78;">0,00</div>
<div class="hline" style="left:592.4px;top:326.95px;width:555.6px"></div>
<svg class="abs" style="left:598.8px;top:309.0px" width="14.5" height="11"><use href="#fgb"/></svg>
<div class="t " style="top:311.64px;font-size:9.4px;line-height:9.4px;left:620px;color:#4d5d78;">GBP</div>
<div class="t " style="top:311.64px;font-size:9.4px;line-height:9.4px;right:371.20px;text-align:right;color:#4d5d78;">0,00</div>
<div class="t " style="top:311.64px;font-size:9.4px;line-height:9.4px;right:251.30px;text-align:right;color:#4d5d78;">0,00</div>
<div class="t " style="top:311.64px;font-size:9.4px;line-height:9.4px;right:131.60px;text-align:right;color:#4d5d78;">0,00</div>
<div class="t " style="top:311.64px;font-size:9.4px;line-height:9.4px;right:22.70px;text-align:right;color:#4d5d78;">0,00</div>
<div class="hline" style="left:592.4px;top:349.00px;width:555.6px"></div>
<svg class="abs" style="left:598.8px;top:331.05px" width="14.5" height="11"><use href="#fhr"/></svg>
<div class="t " style="top:333.69px;font-size:9.4px;line-height:9.4px;left:620px;color:#4d5d78;">HRK</div>
<div class="t " style="top:333.69px;font-size:9.4px;line-height:9.4px;right:371.20px;text-align:right;color:#4d5d78;">0,00</div>
<div class="t " style="top:333.69px;font-size:9.4px;line-height:9.4px;right:251.30px;text-align:right;color:#4d5d78;">0,00</div>
<div class="t " style="top:333.69px;font-size:9.4px;line-height:9.4px;right:131.60px;text-align:right;color:#4d5d78;">0,00</div>
<div class="t " style="top:333.69px;font-size:9.4px;line-height:9.4px;right:22.70px;text-align:right;color:#4d5d78;">0,00</div>
<div class="hline" style="left:592.4px;top:371.05px;width:555.6px"></div>
<svg class="abs" style="left:598.8px;top:353.1px" width="14.5" height="11"><use href="#fhu"/></svg>
<div class="t " style="top:355.74px;font-size:9.4px;line-height:9.4px;left:620px;color:#4d5d78;">HUF</div>
<div class="t " style="top:355.74px;font-size:9.4px;line-height:9.4px;right:371.20px;text-align:right;color:#4d5d78;">-15,00</div>
<div class="t " style="top:355.74px;font-size:9.4px;line-height:9.4px;right:251.30px;text-align:right;color:#4d5d78;">-63 296,20</div>
<div class="t " style="top:355.74px;font-size:9.4px;line-height:9.4px;right:131.60px;text-align:right;color:#4d5d78;">-63 281,20</div>
<div class="t " style="top:355.74px;font-size:9.4px;line-height:9.4px;right:22.70px;text-align:right;color:#4d5d78;">0,00</div>
<div class="hline" style="left:592.4px;top:393.10px;width:555.6px"></div>
<svg class="abs" style="left:598.8px;top:375.15px" width="14.5" height="11"><use href="#fjp"/></svg>
<div class="t " style="top:377.79px;font-size:9.4px;line-height:9.4px;left:620px;color:#4d5d78;">JPY</div>
<div class="t " style="top:377.79px;font-size:9.4px;line-height:9.4px;right:371.20px;text-align:right;color:#4d5d78;">0,00</div>
<div class="t " style="top:377.79px;font-size:9.4px;line-height:9.4px;right:251.30px;text-align:right;color:#4d5d78;">0,00</div>
<div class="t " style="top:377.79px;font-size:9.4px;line-height:9.4px;right:131.60px;text-align:right;color:#4d5d78;">0,00</div>
<div class="t " style="top:377.79px;font-size:9.4px;line-height:9.4px;right:22.70px;text-align:right;color:#4d5d78;">0,00</div>
<svg class="abs" style="left:598.8px;top:397.2px" width="14.5" height="11"><use href="#fno"/></svg>
<div class="t " style="top:399.84px;font-size:9.4px;line-height:9.4px;left:620px;color:#4d5d78;">NOK</div>
<div class="t " style="top:399.84px;font-size:9.4px;line-height:9.4px;right:371.20px;text-align:right;color:#4d5d78;">0,00</div>
<div class="t " style="top:399.84px;font-size:9.4px;line-height:9.4px;right:251.30px;text-align:right;color:#4d5d78;">0,00</div>
<div class="t " style="top:399.84px;font-size:9.4px;line-height:9.4px;right:131.60px;text-align:right;color:#4d5d78;">0,00</div>
<div class="t " style="top:399.84px;font-size:9.4px;line-height:9.4px;right:22.70px;text-align:right;color:#4d5d78;">0,00</div>
<div class="card" style="left:9px;top:458px;width:567px;height:266.5px"></div>
<div class="thd" style="left:14.8px;top:464.5px;width:554.9px;height:22.1px"><div class="vsep" style="left:17.5px"></div><div class="vsep" style="left:125.9px"></div><div class="vsep" style="left:202.3px"></div><div class="vsep" style="left:265.8px"></div><div class="vsep" style="left:317.0px"></div><div class="vsep" style="left:380.9px"></div><div class="vsep" style="left:444.5px"></div><div class="vsep" style="left:495.5px"></div></div>
<div class="t " style="top:471.24px;font-size:9.4px;line-height:9.4px;left:22.5px;color:#3d4860;">*</div>
<div class="t " style="top:471.24px;font-size:9.4px;line-height:9.4px;left:38.8px;color:#3d4860;">Data wprowadzenia</div>
<div class="t " style="top:471.24px;font-size:9.4px;line-height:9.4px;left:147.5px;color:#3d4860;">Transakcja / ...</div>
<div class="t " style="top:471.24px;font-size:9.4px;line-height:9.4px;right:889.50px;text-align:right;color:#3d4860;">Suma sprz...</div>
<div class="t " style="top:471.24px;font-size:9.4px;line-height:9.4px;left:287.7px;color:#3d4860;">Waluta ...</div>
<div class="t " style="top:471.24px;font-size:9.4px;line-height:9.4px;right:773.70px;text-align:right;color:#3d4860;">Kurs</div>
<div class="t " style="top:471.24px;font-size:9.4px;line-height:9.4px;right:710.40px;text-align:right;color:#3d4860;">Suma kupno</div>
<div class="t " style="top:471.24px;font-size:9.4px;line-height:9.4px;left:466px;color:#3d4860;">Waluta ...</div>
<div class="t " style="top:471.24px;font-size:9.4px;line-height:9.4px;left:516.4px;color:#3d4860;">Kupno / S...</div>
<div style="position:absolute;left:14.8px;top:490.3px;width:554.9px;height:209.7px;overflow:hidden;background:#e8e8e9">
<div class="row" style="left:0;top:0.00px;width:554.9px;height:37.80px;background:#e8e8e9;border-bottom-color:#dde6f2"></div>
<div class="dot" style="left:5.10px;top:15.10px;width:6.6px;height:6.6px;background:#7b7b7d"></div>
<div class="t" style="top:0.80px;height:36.80px;letter-spacing:0.15px;display:flex;align-items:center;font-size:9.4px;line-height:14px;color:#4d5d78;left:24.50px;">2024-04-25 12:12:53</div>
<div class="t" style="top:0.00px;height:36.80px;display:flex;align-items:center;font-size:9.4px;line-height:14px;color:#4d5d78;left:132.70px;">Zamówienie<br>kursu wymiany</div>
<div class="t" style="top:0.80px;height:36.80px;display:flex;align-items:center;font-size:9.4px;line-height:14px;color:#4d5d78;right:293.40px;text-align:right;justify-content:flex-end;">11 000,00</div>
<div class="t" style="top:0.80px;height:36.80px;display:flex;align-items:center;font-size:9.4px;line-height:14px;color:#4d5d78;left:272.90px;">USD</div>
<div class="t" style="top:0.80px;height:36.80px;display:flex;align-items:center;font-size:9.4px;line-height:14px;color:#4d5d78;right:178.40px;text-align:right;justify-content:flex-end;">26,500000</div>
<div class="t" style="top:0.80px;height:36.80px;display:flex;align-items:center;font-size:9.4px;line-height:14px;color:#4d5d78;right:115.10px;text-align:right;justify-content:flex-end;">291 500,00</div>
<div class="t" style="top:0.80px;height:36.80px;display:flex;align-items:center;font-size:9.4px;line-height:14px;color:#4d5d78;left:451.20px;">CZK</div>
<div class="t" style="top:0.80px;height:36.80px;display:flex;align-items:center;font-size:9.4px;line-height:14px;color:#4d5d78;left:501.60px;">Sprzedaż</div>
<div class="row" style="left:0;top:37.80px;width:554.9px;height:36.20px;background:#e8e8e9;border-bottom-color:#dde6f2"></div>
<div class="dot" style="left:5.10px;top:52.10px;width:6.6px;height:6.6px;background:#7b7b7d"></div>
<div class="t" style="top:38.60px;height:35.20px;letter-spacing:0.15px;display:flex;align-items:center;font-size:9.4px;line-height:14px;color:#4d5d78;left:24.50px;">2024-04-23 12:22:38</div>
<div class="t" style="top:37.80px;height:35.20px;display:flex;align-items:center;font-size:9.4px;line-height:14px;color:#4d5d78;left:132.70px;">Zamówienie<br>kursu wymiany</div>
<div class="t" style="top:38.60px;height:35.20px;display:flex;align-items:center;font-size:9.4px;line-height:14px;color:#4d5d78;right:293.40px;text-align:right;justify-content:flex-end;">22 237,00</div>
<div class="t" style="top:38.60px;height:35.20px;display:flex;align-items:center;font-size:9.4px;line-height:14px;color:#4d5d78;left:272.90px;">CZK</div>
<div class="t" style="top:38.60px;height:35.20px;display:flex;align-items:center;font-size:9.4px;line-height:14px;color:#4d5d78;right:178.40px;text-align:right;justify-content:flex-end;">22,237000</div>
<div class="t" style="top:38.60px;height:35.20px;display:flex;align-items:center;font-size:9.4px;line-height:14px;color:#4d5d78;right:115.10px;text-align:right;justify-content:flex-end;">1 000,00</div>
<div class="t" style="top:38.60px;height:35.20px;display:flex;align-items:center;font-size:9.4px;line-height:14px;color:#4d5d78;left:451.20px;">EUR</div>
<div class="t" style="top:38.60px;height:35.20px;display:flex;align-items:center;font-size:9.4px;line-height:14px;color:#4d5d78;left:501.60px;">Kupno</div>
<div class="row" style="left:0;top:74.00px;width:554.9px;height:21.80px;background:#ecfcf4;border-bottom-color:#dde6f2"></div>
<div class="dot" style="left:5.10px;top:81.10px;width:6.6px;height:6.6px;background:#4ade80"></div>
<div class="t" style="top:74.80px;height:20.80px;letter-spacing:0.15px;display:flex;align-items:center;font-size:9.4px;line-height:14px;color:#4d5d78;left:24.50px;">2024-04-22 09:51:50</div>
<div class="t" style="top:74.80px;height:20.80px;display:flex;align-items:center;font-size:9.4px;line-height:14px;color:#4d5d78;left:132.70px;">Wymiana walut</div>
<div class="t" style="top:74.80px;height:20.80px;display:flex;align-items:center;font-size:9.4px;line-height:14px;color:#4d5d78;right:293.40px;text-align:right;justify-content:flex-end;">2 536,30</div>
<div class="t" style="top:74.80px;height:20.80px;display:flex;align-items:center;font-size:9.4px;line-height:14px;color:#4d5d78;left:272.90px;">CZK</div>
<div class="t" style="top:74.80px;height:20.80px;display:flex;align-items:center;font-size:9.4px;line-height:14px;color:#4d5d78;right:178.40px;text-align:right;justify-content:flex-end;">25,363000</div>
<div class="t" style="top:74.80px;height:20.80px;display:flex;align-items:center;font-size:9.4px;line-height:14px;color:#4d5d78;right:115.10px;text-align:right;justify-content:flex-end;">100,00</div>
<div class="t" style="top:74.80px;height:20.80px;display:flex;align-items:center;font-size:9.4px;line-height:14px;color:#4d5d78;left:451.20px;">EUR</div>
<div class="t" style="top:74.80px;height:20.80px;display:flex;align-items:center;font-size:9.4px;line-height:14px;color:#4d5d78;left:501.60px;">Kupno</div>
<div class="row" style="left:0;top:95.80px;width:554.9px;height:36.60px;background:#e8e8e9;border-bottom-color:#dde6f2"></div>
<div class="dot" style="left:5.10px;top:110.30px;width:6.6px;height:6.6px;background:#7b7b7d"></div>
<div class="t" style="top:96.60px;height:35.60px;letter-spacing:0.15px;display:flex;align-items:center;font-size:9.4px;line-height:14px;color:#4d5d78;left:24.50px;">2024-04-09 09:55:37</div>
<div class="t" style="top:95.80px;height:35.60px;display:flex;align-items:center;font-size:9.4px;line-height:14px;color:#4d5d78;left:132.70px;">Zamówienie<br>kursu wymiany</div>
<div class="t" style="top:96.60px;height:35.60px;display:flex;align-items:center;font-size:9.4px;line-height:14px;color:#4d5d78;right:293.40px;text-align:right;justify-content:flex-end;">10 000,00</div>
<div class="t" style="top:96.60px;height:35.60px;display:flex;align-items:center;font-size:9.4px;line-height:14px;color:#4d5d78;left:272.90px;">EUR</div>
<div class="t" style="top:96.60px;height:35.60px;display:flex;align-items:center;font-size:9.4px;line-height:14px;color:#4d5d78;right:178.40px;text-align:right;justify-content:flex-end;">15,290000</div>
<div class="t" style="top:96.60px;height:35.60px;display:flex;align-items:center;font-size:9.4px;line-height:14px;color:#4d5d78;right:115.10px;text-align:right;justify-content:flex-end;">152 900,00</div>
<div class="t" style="top:96.60px;height:35.60px;display:flex;align-items:center;font-size:9.4px;line-height:14px;color:#4d5d78;left:451.20px;">CZK</div>
<div class="t" style="top:96.60px;height:35.60px;display:flex;align-items:center;font-size:9.4px;line-height:14px;color:#4d5d78;left:501.60px;">Sprzedaż</div>
<div class="row" style="left:0;top:132.40px;width:554.9px;height:36.00px;background:#e8e8e9;border-bottom-color:#dde6f2"></div>
<div class="dot" style="left:5.10px;top:146.60px;width:6.6px;height:6.6px;background:#7b7b7d"></div>
<div class="t" style="top:133.20px;height:35.00px;letter-spacing:0.15px;display:flex;align-items:center;font-size:9.4px;line-height:14px;color:#4d5d78;left:24.50px;">2024-04-03 14:48:32</div>
<div class="t" style="top:132.40px;height:35.00px;display:flex;align-items:center;font-size:9.4px;line-height:14px;color:#4d5d78;left:132.70px;">Zamówienie<br>kursu wymiany</div>
<div class="t" style="top:133.20px;height:35.00px;display:flex;align-items:center;font-size:9.4px;line-height:14px;color:#4d5d78;right:293.40px;text-align:right;justify-content:flex-end;">100,00</div>
<div class="t" style="top:133.20px;height:35.00px;display:flex;align-items:center;font-size:9.4px;line-height:14px;color:#4d5d78;left:272.90px;">EUR</div>
<div class="t" style="top:133.20px;height:35.00px;display:flex;align-items:center;font-size:9.4px;line-height:14px;color:#4d5d78;right:178.40px;text-align:right;justify-content:flex-end;">29,000000</div>
<div class="t" style="top:133.20px;height:35.00px;display:flex;align-items:center;font-size:9.4px;line-height:14px;color:#4d5d78;right:115.10px;text-align:right;justify-content:flex-end;">2 900,00</div>
<div class="t" style="top:133.20px;height:35.00px;display:flex;align-items:center;font-size:9.4px;line-height:14px;color:#4d5d78;left:451.20px;">CZK</div>
<div class="t" style="top:133.20px;height:35.00px;display:flex;align-items:center;font-size:9.4px;line-height:14px;color:#4d5d78;left:501.60px;">Sprzedaż</div>
<div class="row" style="left:0;top:168.40px;width:554.9px;height:36.50px;background:#e8e8e9;border-bottom-color:#dde6f2"></div>
<div class="dot" style="left:5.10px;top:182.85px;width:6.6px;height:6.6px;background:#7b7b7d"></div>
<div class="t" style="top:169.20px;height:35.50px;letter-spacing:0.15px;display:flex;align-items:center;font-size:9.4px;line-height:14px;color:#4d5d78;left:24.50px;">2024-03-22 15:05:54</div>
<div class="t" style="top:168.40px;height:35.50px;display:flex;align-items:center;font-size:9.4px;line-height:14px;color:#4d5d78;left:132.70px;">Zamówienie<br>kursu wymiany</div>
<div class="t" style="top:169.20px;height:35.50px;display:flex;align-items:center;font-size:9.4px;line-height:14px;color:#4d5d78;right:293.40px;text-align:right;justify-content:flex-end;">23 000,00</div>
<div class="t" style="top:169.20px;height:35.50px;display:flex;align-items:center;font-size:9.4px;line-height:14px;color:#4d5d78;left:272.90px;">CZK</div>
<div class="t" style="top:169.20px;height:35.50px;display:flex;align-items:center;font-size:9.4px;line-height:14px;color:#4d5d78;right:178.40px;text-align:right;justify-content:flex-end;">23,000000</div>
<div class="t" style="top:169.20px;height:35.50px;display:flex;align-items:center;font-size:9.4px;line-height:14px;color:#4d5d78;right:115.10px;text-align:right;justify-content:flex-end;">1 000,00</div>
<div class="t" style="top:169.20px;height:35.50px;display:flex;align-items:center;font-size:9.4px;line-height:14px;color:#4d5d78;left:451.20px;">USD</div>
<div class="t" style="top:169.20px;height:35.50px;display:flex;align-items:center;font-size:9.4px;line-height:14px;color:#4d5d78;left:501.60px;">Kupno</div>
</div>
<div class="dot" style="left:21.50px;top:709.50px;width:6.6px;height:6.6px;background:#0b1a6e"></div>
<div class="t " style="top:709.93px;font-size:8px;line-height:8px;left:31.6px;color:#4a5569;">Transakcja rozliczona</div>
<div class="dot" style="left:121.20px;top:709.50px;width:6.6px;height:6.6px;background:#4ade80"></div>
<div class="t " style="top:709.93px;font-size:8px;line-height:8px;left:131.3px;color:#4a5569;">Zarejestrowana transakcja</div>
<div class="dot" style="left:239.20px;top:709.50px;width:6.6px;height:6.6px;background:#e02a3a"></div>
<div class="t " style="top:709.93px;font-size:8px;line-height:8px;left:249.3px;color:#4a5569;">Transakcja anulowana</div>
<div class="dot" style="left:341.20px;top:709.50px;width:6.6px;height:6.6px;background:#7b7b7d"></div>
<div class="t " style="top:709.93px;font-size:8px;line-height:8px;left:351.3px;color:#4a5569;">Transakcja przeterminowana</div>
<div class="card" style="left:586px;top:458px;width:569px;height:266px"></div>
<div class="thd" style="left:592.4px;top:464.5px;width:555.6px;height:22.1px"><div class="vsep" style="left:18.2px"></div><div class="vsep" style="left:126.4px"></div></div>
<div class="t " style="top:471.24px;font-size:9.4px;line-height:9.4px;left:599.5px;color:#3d4860;">*</div>
<div class="t " style="top:471.24px;font-size:9.4px;line-height:9.4px;left:617.2px;color:#3d4860;">Dzień</div>
<div class="t " style="top:471.24px;font-size:9.4px;line-height:9.4px;left:725.3px;color:#3d4860;">Informacje</div>
<div style="position:absolute;left:592.4px;top:490.4px;width:555.6px;height:209.6px;overflow:hidden">
<div class="row" style="left:0;top:0.00px;width:555.6px;height:36.90px;background:#fcfae6"></div>
<div class="dot" style="left:5.80px;top:14.65px;width:6.6px;height:6.6px;background:#fad619"></div>
<div class="t" style="letter-spacing:0.25px;left:24.80px;top:0.60px;height:35.90px;display:flex;align-items:center;font-size:9.4px;line-height:14px;color:#4d5d78">2024-05-03 09:46:49</div>
<div class="t" style="left:132.90px;top:0.00px;height:35.90px;display:flex;align-items:center;font-size:9.4px;line-height:14px;color:#4d5d78">V současné době není dostatek prostředků na IPÚ k pokrytí odchozí platby. Platba je zaevidována.<br>Pro úspěšné provedení platby doplňte prostředky na IPÚ.</div>
<div class="row" style="left:0;top:36.90px;width:555.6px;height:22.60px;background:#ffffff"></div>
<div class="dot" style="left:5.80px;top:44.40px;width:6.6px;height:6.6px;background:#4ade80"></div>
<div class="t" style="letter-spacing:0.25px;left:24.80px;top:37.50px;height:21.60px;display:flex;align-items:center;font-size:9.4px;line-height:14px;color:#4d5d78">2024-05-03 09:46:49</div>
<div class="t" style="left:132.90px;top:37.50px;height:21.60px;display:flex;align-items:center;font-size:9.4px;line-height:14px;color:#4d5d78">Příkaz k úhradě přijat.</div>
<div class="row" style="left:0;top:59.50px;width:555.6px;height:49.60px;background:#fcfae6"></div>
<div class="dot" style="left:5.80px;top:80.50px;width:6.6px;height:6.6px;background:#fad619"></div>
<div class="t" style="letter-spacing:0.25px;left:24.80px;top:60.10px;height:48.60px;display:flex;align-items:center;font-size:9.4px;line-height:14px;color:#4d5d78">2024-04-30 10:15:18</div>
<div class="t" style="left:132.90px;top:59.50px;height:48.60px;display:flex;align-items:center;font-size:9.4px;line-height:14px;color:#4d5d78">În prezent, suma fondurilor de pe IPA nu este suficientă pentru a acoperi toate tranzac?iile de<br>debit; se înregistrează comenzi. Pentru finalizarea cu succes a ordinelor de plată, vă rugăm să<br>reaproviziona?i fondurile de pe IPA.</div>
<div class="row" style="left:0;top:109.10px;width:555.6px;height:22.40px;background:#ffffff"></div>
<div class="dot" style="left:5.80px;top:116.50px;width:6.6px;height:6.6px;background:#4ade80"></div>
<div class="t" style="letter-spacing:0.25px;left:24.80px;top:109.70px;height:21.40px;display:flex;align-items:center;font-size:9.4px;line-height:14px;color:#4d5d78">2024-04-30 10:15:18</div>
<div class="t" style="left:132.90px;top:109.70px;height:21.40px;display:flex;align-items:center;font-size:9.4px;line-height:14px;color:#4d5d78">Ordinul de plată a fost primit.</div>
<div class="row" style="left:0;top:131.50px;width:555.6px;height:22.00px;background:#ffffff"></div>
<div class="dot" style="left:5.80px;top:138.70px;width:6.6px;height:6.6px;background:#4ade80"></div>
<div class="t" style="letter-spacing:0.25px;left:24.80px;top:132.10px;height:21.00px;display:flex;align-items:center;font-size:9.4px;line-height:14px;color:#4d5d78">2024-04-25 12:29:13</div>
<div class="t" style="left:132.90px;top:132.10px;height:21.00px;display:flex;align-items:center;font-size:9.4px;line-height:14px;color:#4d5d78">Partner banki kapcsolata mentésre került.</div>
<div class="row" style="left:0;top:153.50px;width:555.6px;height:22.10px;background:#ffffff"></div>
<div class="dot" style="left:5.80px;top:160.75px;width:6.6px;height:6.6px;background:#4ade80"></div>
<div class="t" style="letter-spacing:0.25px;left:24.80px;top:154.10px;height:21.10px;display:flex;align-items:center;font-size:9.4px;line-height:14px;color:#4d5d78">2024-04-25 12:12:54</div>
<div class="t" style="left:132.90px;top:154.10px;height:21.10px;display:flex;align-items:center;font-size:9.4px;line-height:14px;color:#4d5d78">Objednávka byla přijata.</div>
<div class="row" style="left:0;top:175.60px;width:555.6px;height:22.10px;background:#ffffff"></div>
<div class="dot" style="left:5.80px;top:182.85px;width:6.6px;height:6.6px;background:#4ade80"></div>
<div class="t" style="letter-spacing:0.25px;left:24.80px;top:176.20px;height:21.10px;display:flex;align-items:center;font-size:9.4px;line-height:14px;color:#4d5d78">2024-04-23 12:22:39</div>
<div class="t" style="left:132.90px;top:176.20px;height:21.10px;display:flex;align-items:center;font-size:9.4px;line-height:14px;color:#4d5d78">Objednávka byla přijata.</div>
<div class="row" style="left:0;top:197.70px;width:555.6px;height:21.90px;background:#ffffff"></div>
<div class="dot" style="left:5.80px;top:204.85px;width:6.6px;height:6.6px;background:#4ade80"></div>
<div class="t" style="letter-spacing:0.25px;left:24.80px;top:198.30px;height:20.90px;display:flex;align-items:center;font-size:9.4px;line-height:14px;color:#4d5d78">2024-04-22 09:51:51</div>
<div class="t" style="left:132.90px;top:198.30px;height:20.90px;display:flex;align-items:center;font-size:9.4px;line-height:14px;color:#4d5d78">Obchod byl úspěšně uzavřen s kurzem 25,363</div>
</div>
<div class="dot" style="left:598.70px;top:709.50px;width:6.6px;height:6.6px;background:#4ade80"></div>
<div class="t " style="top:709.93px;font-size:8px;line-height:8px;left:608.8px;color:#4a5569;">Zwykła wiadomość</div>
<div class="dot" style="left:690.20px;top:709.50px;width:6.6px;height:6.6px;background:#fad619"></div>
<div class="t " style="top:709.93px;font-size:8px;line-height:8px;left:700.3px;color:#4a5569;">Powiadomienie</div>
<div class="dot" style="left:767.20px;top:709.50px;width:6.6px;height:6.6px;background:#e02a3a"></div>
<div class="t " style="top:709.93px;font-size:8px;line-height:8px;left:777.3px;color:#4a5569;">Ważne informacje</div>
</div></body></html>
